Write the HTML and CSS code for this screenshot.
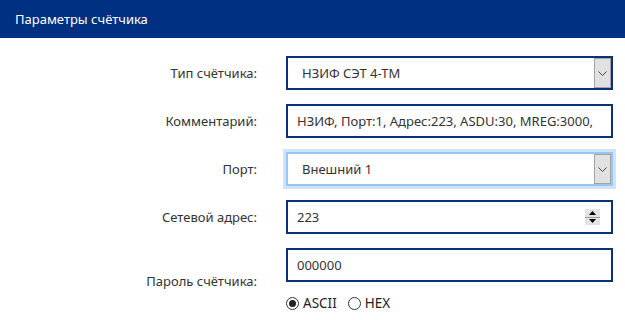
FILE: index.html
```html
<!DOCTYPE html>
<html lang="ru">
<head>
<meta charset="utf-8">
<link rel="stylesheet" href="styles.css">
</head>
<body>
<div class="header">Параметры счётчика</div>
<div class="form">
  <div class="label">Тип счётчика:</div>
  <div class="field select">
    <span class="val">НЗИФ СЭТ 4-ТМ</span>
    <span class="drop"><svg width="9" height="5" viewBox="0 0 9 5"><path d="M0.5 0.5 L4.5 4.5 L8.5 0.5" fill="none" stroke="#444" stroke-width="1"/></svg></span>
  </div>

  <div class="label">Комментарий:</div>
  <div class="field text"><span class="val">НЗИФ, Порт:1, Адрес:223, ASDU:30, MREG:3000,</span></div>

  <div class="label">Порт:</div>
  <div class="field select focus">
    <span class="val">Внешний 1</span>
    <span class="drop"><svg width="9" height="5" viewBox="0 0 9 5"><path d="M0.5 0.5 L4.5 4.5 L8.5 0.5" fill="none" stroke="#444" stroke-width="1"/></svg></span>
  </div>

  <div class="label">Сетевой адрес:</div>
  <div class="field text">
    <span class="val">223</span>
    <span class="spin">
      <span class="sp up"><svg width="7" height="4" viewBox="0 0 7 4"><path d="M0 4 L3.5 0 L7 4 Z" fill="#000"/></svg></span>
      <span class="sp down"><svg width="7" height="4" viewBox="0 0 7 4"><path d="M0 0 L3.5 4 L7 0 Z" fill="#000"/></svg></span>
    </span>
  </div>

  <div class="label pw">Пароль счётчика:</div>
  <div class="group">
    <div class="field text"><span class="val">000000</span></div>
    <div class="radios">
      <span class="radio on"><span class="circle"><span class="dot"></span></span>ASCII</span>
      <span class="radio"><span class="circle"></span>HEX</span>
    </div>
  </div>
</div>
</body>
</html>
```

FILE: styles.css
```css
html, body {
  margin: 0;
  padding: 0;
  background: #fff;
  font-family: "Noto Sans", "Open Sans", sans-serif;
  font-size: 13px;
  color: #333;
}
.header {
  height: 38px;
  background: #003082;
  color: #fff;
  font-size: 13px;
  line-height: 38px;
  padding-left: 15px;
}
.form {
  display: grid;
  grid-template-columns: 257px 327px;
  column-gap: 29px;
  row-gap: 14px;
  padding-top: 18px;
  align-items: center;
}
.label {
  text-align: right;
  color: #333;
}
.field {
  box-sizing: border-box;
  height: 34px;
  border: 2px solid #0b2f7f;
  display: flex;
  align-items: center;
  position: relative;
  background: #fff;
}
.field .val {
  flex: 1;
  white-space: nowrap;
  overflow: hidden;
}
.text .val { padding-left: 9px; }
.select .val { padding-left: 14px; }
.drop {
  box-sizing: border-box;
  width: 17px;
  height: 30px;
  background: #e1e1e1;
  border: 1px solid #a3a3a3;
  display: flex;
  align-items: center;
  justify-content: center;
}
.focus {
  border-color: #98c6f2;
  box-shadow: 0 0 0 3px #cfe4f9;
}
.spin {
  width: 15px;
  height: 16px;
  display: flex;
  flex-direction: column;
  background: #e3e3e3;
  margin-right: 11px;
}
.sp {
  flex: 1;
  display: flex;
  align-items: center;
  justify-content: center;
}
.sp.up { border-bottom: 1px solid #9a9a9a; }
.group {
  display: flex;
  flex-direction: column;
  gap: 10px;
}
.radios {
  display: flex;
  gap: 11px;
  height: 22px;
  align-items: center;
  color: #222;
  font-size: 13.5px;
}
.radio {
  display: flex;
  align-items: center;
  gap: 4px;
}
.circle {
  box-sizing: border-box;
  width: 13px;
  height: 13px;
  border: 1px solid #333;
  border-radius: 50%;
  display: flex;
  align-items: center;
  justify-content: center;
}
.dot {
  width: 7px;
  height: 7px;
  border-radius: 50%;
  background: #222;
}
```
